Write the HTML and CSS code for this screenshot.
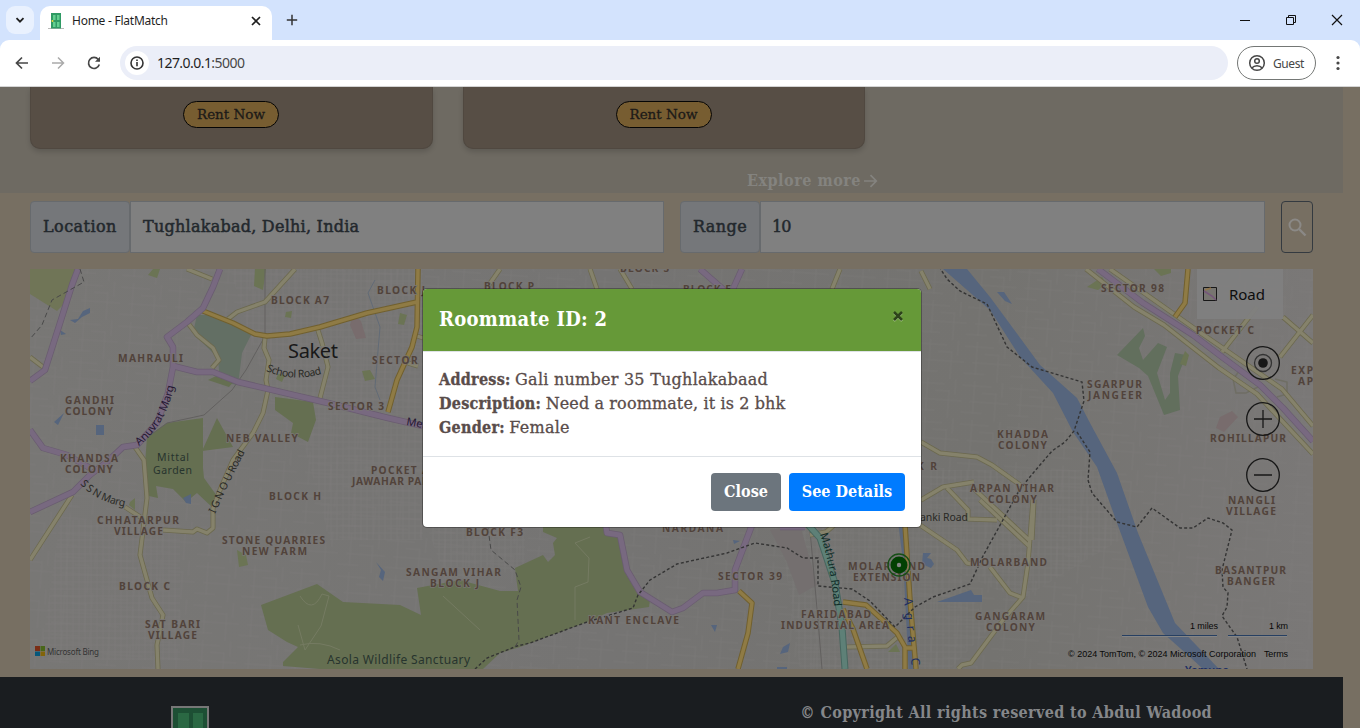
FILE: index.html
```html
<!DOCTYPE html>
<html lang="en">
<head>
<meta charset="utf-8">
<title>Home - FlatMatch</title>
<link rel="stylesheet" href="styles.css">
</head>
<body>
<div class="browser">
  <header class="tabs">
    <div class="tab-list"><svg width="12" height="12" viewBox="0 0 12 12"><path d="M2.5 4.2 6 7.7 9.5 4.2" fill="none" stroke="#1f1f1f" stroke-width="1.8"/></svg></div>
    <div class="tab">
      <svg class="favicon" width="16" height="16" viewBox="0 0 16 16"><path d="M0 15.5h16" stroke="#b9b9b9"/><path d="M3 0h10v15.5H3z" fill="#2f9a64"/><path d="M5 2h2.5v5H5zM9 2h2.500v5H9zM5 9h2.500v5H5zM9 9h2.500v5H9z" fill="#63cf8f"/><circle cx="4.500" cy="8" r="1" fill="#f5d93a"/></svg>
      <span class="tab-title">Home - FlatMatch</span>
      <svg class="tab-close" width="10" height="10" viewBox="0 0 10 10"><path d="m1 1 8 8M9 1 1 9" stroke="#1f1f1f" stroke-width="1.7"/></svg>
    </div>
    <svg class="new-tab" width="12" height="12" viewBox="0 0 12 12"><path d="M6 .8v10.400M.8 6h10.400" stroke="#333" stroke-width="1.5"/></svg>
    <div class="window-controls">
      <svg width="12" height="12" viewBox="0 0 12 12"><path d="M1 6.500h10" stroke="#111"/></svg>
      <svg width="12" height="12" viewBox="0 0 12 12"><path d="M1.500 3.500h7v7h-7zM3.500 3.500v-2h7v7h-2" fill="none" stroke="#111"/></svg>
      <svg width="12" height="12" viewBox="0 0 12 12"><path d="m1 1 10 10M11 1 1 11" stroke="#111" stroke-width="1.200"/></svg>
    </div>
  </header>
  <div class="toolbar">
    <svg width="16" height="16" viewBox="0 0 16 16"><path d="M14 8H3M8 2.500 2.500 8 8 13.500" fill="none" stroke="#474747" stroke-width="1.700"/></svg>
    <svg width="16" height="16" viewBox="0 0 16 16"><path d="M2 8h11M8 2.500 13.500 8 8 13.500" fill="none" stroke="#aaa" stroke-width="1.500"/></svg>
    <svg width="16" height="16" viewBox="0 0 16 16"><path d="M13.300 9.500A5.500 5.500 0 1 1 12.300 4.500L13.500 6" fill="none" stroke="#474747" stroke-width="1.700"/><path d="M14 1.800v5H9z" fill="#474747"/></svg>
    <div class="address"><span class="info"><svg width="16" height="16" viewBox="0 0 16 16"><circle cx="8" cy="8" r="6" fill="none" stroke="#333" stroke-width="1.600"/><path d="M8 7v4.200M8 4.600v1.500" stroke="#333" stroke-width="1.600"/></svg></span><span class="url"><b>127.0.0.1</b>:5000</span></div>
    <div class="guest"><svg width="18" height="18" viewBox="0 0 18 18"><circle cx="9" cy="9" r="7.300" fill="none" stroke="#474747" stroke-width="1.500"/><circle cx="9" cy="7" r="2.300" fill="none" stroke="#474747" stroke-width="1.500"/><path d="M3.800 14c2.600-3 7.800-3 10.400 0" fill="none" stroke="#474747" stroke-width="1.500"/></svg><span>Guest</span></div>
    <svg class="dots" width="4" height="16" viewBox="0 0 4 16"><circle cx="2" cy="2.500" r="1.600"/><circle cx="2" cy="8" r="1.600"/><circle cx="2" cy="13.500" r="1.600"/></svg>
  </div>
</div>

<main class="page">
  <section class="listings">
    <div class="cards">
      <div class="card"><button class="rent">Rent Now</button></div>
      <div class="card"><button class="rent">Rent Now</button></div>
    </div>
    <div class="explore"><span>Explore more</span><svg width="15" height="14" viewBox="0 0 15 14"><path d="M1 7h12M7.500 1.200 13.300 7l-5.800 5.800" fill="none" stroke="#84837f" stroke-width="1.700"/></svg></div>
  </section>

  <section class="search">
    <div class="field location"><span class="label">Location</span><span class="value">Tughlakabad, Delhi, India</span></div>
    <div class="field range"><span class="label">Range</span><span class="value">10</span></div>
    <button class="search-button"><svg width="19" height="19" viewBox="0 0 19 19"><circle cx="7" cy="7" r="5.500" fill="none" stroke="#8b8986" stroke-width="2"/><path d="m11 11 6.500 6.500" stroke="#8b8986" stroke-width="2.400"/></svg></button>
  </section>

  <svg class="map" width="1283" height="400" viewBox="30 269 1283 400">
    <defs>
      <pattern id="streets" width="47" height="39" patternUnits="userSpaceOnUse" patternTransform="rotate(4)"><path d="M0 5h29M12 0v33M8 21h39M34 11v28M0 32h21M40 0v15M20 12h14" fill="none" stroke="#858483" stroke-width=".7"/></pattern>
      <pattern id="blocks" width="6" height="7" patternUnits="userSpaceOnUse"><path d="M0 1h6M1 0v7" stroke="#82807f" stroke-width=".6"/></pattern>
      <linearGradient id="land" x1="0" x2="1"><stop stop-color="#787775"/><stop offset=".45" stop-color="#757473"/><stop offset=".75" stop-color="#747370"/><stop offset="1" stop-color="#7a7877"/></linearGradient>
      <g id="minor">
        <path d="M187 269l25 10M295 269l-30 33-28 10-9 7M188 323l9 12 16 13 6 12-7 8M265 338l-1 10 5 12-3 20 2 10-5 23-10 20-20 27-13 30-7 18v20l-6 5-10-4-4 3-30-2M317 327l5 16 6 24-8 31M30 357l13 10M135 447l9 13 3 38-7 57 12 43 11 17-6 30 1 24M72 495l-42 65M125 507l20 13M417 336l6 2M418 366l-10-3"/>
        <path d="M921 442l19 11 37 4 15 8 31 22M921 500l22-13 31-5M947 488l21 22v9l29 1M972 487l57 53M1034 500l-2 40M920 525l37 25 10 13 5 1M980 500l50 47M1033 500l-5 63-5 34-20 23-32 43-9 2-4 4M990 567l20 26 13 5M847 647l40-1 13-11M810 535l16-3 14-12M1222 352l35-45M1283 317l30 26M1313 315l-33 42"/>
        <path d="M1086 269l48 38 30 18 55 43 38 26 56 60M1110 269l88 62 32 22 52 36 31 37"/>
        <path d="M500 269l-14 20M590 269l7 20M620 269l12 20M840 269l-8 20M930 289l-9-18"/>
      </g>
      <g id="major">
        <path d="M203 311l30 12 22 11 12 2 23-2 30-7 47-14 50-11M418 269l-1 58-5 20-15 33-9 32M1188 269l-3 34-10 14M739 591l13 12-4 30-10 36M905 525l5 75 6 69M843 602l23 3 31 28 8 14v22M843 609l10 20 14 40M905 648h10"/>
      </g>
      <g id="arterial">
        <path d="M78 269l-6 16-12 38-15 47-15 11M220 269l-7 18-10 21-16 14-20 15 6 10v20l-5 26-11 30-20 22-14 2-15 14-18 14-17 17-43 20M30 430l13 18 24 7 23 13M173 366l24 6h16l25 10 90 21 60 15 35 8M605 520l2 13 13 2 7 35 13 22 32 20 11-4 20-15h14l18-3v-20l17-45"/>
        <path d="M1098 269l45 34 50 32 29 22 38 28 23 23 30 33M700 269l25 22M742 269l-10 22M780 527h25"/>
      </g>
    </defs>
    <rect x="30" y="269" width="1283" height="400" fill="url(#land)"/>
    <rect x="30" y="269" width="1283" height="400" fill="url(#streets)" opacity=".3"/>
    <path d="M230 269h193v180H330l-60-50zM60 520h120v140H40zM300 430h123v110H330zM425 520h100v50l-80 10zM780 528h150l60 100-40 41H800zM930 470h170l20 70-100 60-90-40z" fill="url(#blocks)" opacity=".5"/>

    <g class="park">
      <path d="M30 269h48l-13 34-8 8-27-17z" fill="#707557"/>
      <path d="M197 315l20 0 35 18-10 20-4 32-18-3-2-24-25-25z" fill="#636f64"/>
      <path d="M147 437l20-14 36-5v50l1 10 13 18-4 12-16-15-11 9-13-13-17-3 2 12-9-2-4-32zM217 418l16 29-31 4zM275 397l38 5 3 18-8 22-17-9 2-10-18-13zM208 380l10-5 17 5-6 7z"/>
      <path d="M261 605l56-21 26 18 57 3 21 10-4-27 43-8 40 11h18l-3-23 28-13 5 7 7-7-2-12 4-5-14-6v-12h62l2 15h13l7 35 13 22 10 8-1 7-42 6-20 9-67 25-20 6-17 16H320l-37-3v-4l15-15-11-5-19-12z"/>
      <path d="M1117 355l26-27 2 8-6 12 4 12 15-17 9 4-10 26 8 27 5-7v-20l5-20 11 2-8 21 2 34-16 5-16-39-9-8z" fill="#626f5d"/>
      <path d="M1154 269h17v4l-10 3zM1087 287l15-10 4 7-8 6zM1185 351l4 4-3 11-6-2zM148 275l5-6h7l-3 9zM255 269h11l-3 21-9-4zM286 312l6-1-1 7-6-1zM400 313l7 2-3 10-6-1zM278 374l7 1-3 7-6-3zM130 502l5-4v12l-6-5zM237 550l9 5 2 10-9 2zM362 371l8-1 5 9-10 2zM888 652l8-8 4 8z" fill="#6b7454"/>
      <path d="M353 315l8 6 5 17-10 1-6-14zM1220 417l12-6 6 6-14 15-8-4z" fill="#786c6d"/>
      <path d="M770 530l30-5 17 60-18 10-13-35z" fill="#746f6f"/>
    </g>
    <path d="M340 650q-20-10-40-5M300 596q12 19 22-2l7 2-8 30-16 24-7-25M443 596l37 34M590 537l-15 6 14 15-1 24-13 5v33" fill="none" stroke="#757b62" stroke-width="1"/>

    <g class="water">
      <path d="M943 269H967L990 297 1040 365 1077 398 1090 423 1117 473 1138 533 1175 623 1219 669H1203L1190 657 1163 633 1148 607 1117 523 1097 467 1073 432 1053 393 1020 357 990 310z"/>
      <path d="M70 320l8-1 5-8 7-3v5l-8 4-7 6zM60 330l6 4-5 1zM54 422l10-9-6 12zM96 425h8v10h-8zM183 498l8-4v10l-5-1zM376 562l9 10-2 9-4-4 2-7zM997 292h7l8 12-7-3zM923 553h8l-4 5 4 1 3 5-3 4-9-4zM937 602l34-12 3 5h8v7zM733 540l7 1-6 3zM711 625h6l-2 7zM783 647l7-4-2 9-8 2zM777 667h10v2h-10z"/>
      <path d="M902 525l5 40 5 104" fill="none" stroke="#5b677b" stroke-width="7"/>
      <path d="M375 280l-7 13 12 34-5 60 5 13" fill="none" stroke="#626b76"/>
    </g>

    <g class="rail">
      <path d="M265 269v67l-19 34-14 20-28 25-37 8-30 22M810 530l8 90 4 49"/>
    </g>
    <path d="M1241 369l-8 10 3 14h10l12-6M1275 379l12 3v12l-10 3" fill="none" stroke="#6f6e64" stroke-width="1.500"/>

    <use href="#minor" class="roads minor-casing"/>
    <use href="#minor" class="roads minor-fill"/>
    <use href="#major" class="roads major-casing"/>
    <use href="#major" class="roads major-fill"/>
    <use href="#arterial" class="roads arterial-casing"/>
    <use href="#arterial" class="roads arterial-fill"/>
    <path d="M802 518l18 20 15 45 7 44 3 42" fill="none" stroke="#47665f" stroke-width="7"/>
    <path d="M802 518l18 20 15 45 7 44 3 42" fill="none" stroke="#5e8077" stroke-width="5"/>

    <g class="boundary">
      <path d="M475 669l12-11 30-12 13-3 57-21 46-14 5-13 12-15 27-16 50-11 28-10 32 5 16 10h15v28l34 3 18 12 25 26 20-20 18-10 37-13 13-28 37-67 14-17 18-21 13-9 9-11 10-30-2-19-50-15-25-20-20-43-27-13-13-12-7-11"/>
      <path d="M1077 432l13 20-2 28 4 13 25 29 20 5 15-19 28 20h13l15-10 15 5 9 7-10 40 1 17 5 6-1 14-5 9 15 21 10 32"/>
      <path class="fine" d="M80 269l4 13-32 18-10 25-12 14M488 528l3 22 24 20 6 17-4 13 2 40-4 7"/>
    </g>

    <g class="place">
      <text x="271" y="304" textLength="58">BLOCK A7</text><text x="377" y="294" textLength="48">BLOCK J</text><text x="484" y="290" textLength="50">BLOCK P</text><text x="683" y="293" textLength="48">BLOCK E</text><text x="620" y="272" textLength="49">BLOCK S</text>
      <text x="118" y="362" textLength="65">MAHRAULI</text><text x="372" y="364" textLength="57">SECTOR 4</text><text x="65" y="404" textLength="49">GANDHI</text><text x="65" y="415" textLength="48">COLONY</text>
      <text x="328" y="410" textLength="56">SECTOR 3</text><text x="226" y="442" textLength="72">NEB VALLEY</text><text x="60" y="462" textLength="58">KHANDSA</text><text x="65" y="473" textLength="48">COLONY</text>
      <text x="371" y="474" textLength="58">POCKET A</text><text x="352" y="485" textLength="84">JAWAHAR PARK</text><text x="269" y="500" textLength="52">BLOCK H</text><text x="97" y="524" textLength="82">CHHATARPUR</text><text x="114" y="535" textLength="49">VILLAGE</text>
      <text x="222" y="544" textLength="103">STONE QUARRIES</text><text x="242" y="555" textLength="65">NEW FARM</text><text x="119" y="590" textLength="51">BLOCK C</text><text x="145" y="628" textLength="55">SAT BARI</text><text x="148" y="639" textLength="49">VILLAGE</text>
      <text x="466" y="536" textLength="57">BLOCK F3</text><text x="406" y="576" textLength="95">SANGAM VIHAR</text><text x="430" y="587" textLength="49">BLOCK J</text><text x="662" y="532" textLength="61">NARDANA</text><text x="718" y="580" textLength="64">SECTOR 39</text><text x="588" y="624" textLength="91">KANT ENCLAVE</text>
      <text x="848" y="570" textLength="77">MOLARBAND</text><text x="853" y="581" textLength="67">EXTENSION</text><text x="801" y="618" textLength="70">FARIDABAD</text><text x="781" y="629" textLength="108">INDUSTRIAL AREA</text><text x="970" y="566" textLength="77">MOLARBAND</text><text x="975" y="620" textLength="70">GANGARAM</text><text x="986" y="631" textLength="49">COLONY</text>
      <text x="970" y="492" textLength="84">ARPAN VIHAR</text><text x="988" y="503" textLength="49">COLONY</text><text x="917" y="470" textLength="20">K R</text><text x="997" y="438" textLength="51">KHADDA</text><text x="998" y="449" textLength="49">COLONY</text><text x="1087" y="388" textLength="55">SGARPUR</text><text x="1088" y="399" textLength="54">JANGEER</text>
      <text x="1101" y="292" textLength="63">SECTOR 98</text><text x="1196" y="334" textLength="58">POCKET C</text><text x="1291" y="374" textLength="22">EXP</text><text x="1298" y="385" textLength="15">AP</text><text x="1210" y="442" textLength="76">ROHILLAPUR</text><text x="1228" y="504" textLength="47">NANGLI</text><text x="1226" y="515" textLength="50">VILLAGE</text><text x="1215" y="574" textLength="71">BASANTPUR</text><text x="1227" y="585" textLength="48">BANGER</text>
    </g>
    <text x="288" y="358" textLength="50" class="city">Saket</text>
    <g class="nature"><text x="157" y="461" textLength="32">Mittal</text><text x="153" y="474" textLength="39">Garden</text><text x="327" y="664" textLength="143" class="wide">Asola Wildlife Sanctuary</text></g>
    <g class="road">
      <path id="anuvrat" d="M139 446q30-24 36-66" fill="none"/><path id="school" d="M266 371q28 12 59 2" fill="none"/><path id="ssn" d="M80 484q16 18 47 23" fill="none"/><path id="ignou" d="M215 514q14-32 32-66" fill="none"/><path id="mathura" d="M820 534q11 32 14 73" fill="none"/>
      <text textLength="71" fill="#251832"><textPath href="#anuvrat">Anuvrat Marg</textPath></text><text class="small" textLength="57"><textPath href="#school">School Road</textPath></text><text class="small" textLength="51"><textPath href="#ssn">S S N Marg</textPath></text><text class="small" textLength="69"><textPath href="#ignou">I G N O U Road</textPath></text><text textLength="74" fill="#102c28"><textPath href="#mathura">Mathura Road</textPath></text>
      <text class="canal" x="904" y="598" transform="rotate(86 904 598)">A</text><text class="canal" x="905" y="613" transform="rotate(86 905 613)">g</text><text class="canal" x="907" y="626" transform="rotate(86 907 626)">r</text><text class="canal" x="908" y="636" transform="rotate(86 908 636)">a</text><text class="canal" x="911" y="658" transform="rotate(86 911 658)">C</text>
      <text x="406" y="425" transform="rotate(10 406 425)" fill="#251832">Mehr</text><text x="915" y="521" textLength="53" class="small">Tanki Road</text><text x="1185" y="674" textLength="44" fill="#202e63" font-weight="600">Yamuna</text>
    </g>

    <g><circle cx="899" cy="565" r="11" fill="none" stroke="#164f16" stroke-width="1.300"/><circle cx="899" cy="565" r="8.500" fill="#034003"/><circle cx="899" cy="565" r="2.200" fill="#858585"/></g>
    <rect x="1197" y="269" width="86" height="50" fill="#808080" opacity=".92"/>
    <path d="M1203.500 287.500h13v13h-13z" fill="#777570" stroke="#171717"/><path d="M1204 291l8 5 4 4" fill="none" stroke="#75567a" stroke-width="1.500"/><path d="M1205 290l6-2" stroke="#927548" stroke-width="1.500"/>
    <text x="1229" y="300" class="map-mode" textLength="36">Road</text>
    <g class="controls"><circle cx="1263" cy="363" r="16.300"/><circle cx="1263" cy="419" r="16.300"/><circle cx="1263" cy="475" r="16.300"/><path d="M1254 419h18M1263 410v18M1254 475h18"/><circle class="target-ring" cx="1263" cy="363" r="8.500"/><circle class="target-dot" cx="1263" cy="363" r="4.800"/></g>
    <path d="M35 646h5v5h-5z" fill="#7a2d15"/><path d="M40.500 646h4.500v5h-4.500z" fill="#496619"/><path d="M35 651.500h5v4.500h-5z" fill="#06577b"/><path d="M40.500 651.500h4.500v4.500h-4.500z" fill="#82640a"/>
    <text x="47" y="654.500" class="bing" textLength="52">Microsoft Bing</text>
    <g class="legal"><text x="1190" y="629" textLength="28">1 miles</text><text x="1269" y="629" textLength="19">1 km</text><text x="1068" y="657" textLength="188">© 2024 TomTom, © 2024 Microsoft Corporation</text><text x="1264" y="657" textLength="24">Terms</text></g>
    <path d="M1122 636.500h95M1228 636.500h59" stroke="#858585"/><path d="M1122 635.500h95M1228 635.500h59" stroke="#263f62"/>
  </svg>

  <footer class="footer">
    <svg width="40" height="26" viewBox="0 0 40 26"><path d="M2 26V1h36v25" fill="#1d4f34" stroke="#777" stroke-width="2"/><path d="M8 7h11v19H8zM23 7h10v19H23z" fill="#2a6843"/></svg>
    <span class="copyright">© Copyright All rights reserved to Abdul Wadood</span>
  </footer>
</main>

<div class="modal" role="dialog">
  <div class="modal-header"><h5>Roommate ID: 2</h5><svg width="12" height="12" viewBox="0 0 12 12"><path d="m2 3 8 8M10 3l-8 8" stroke="#a7c68b" stroke-width="2.400"/><path d="m2 2 8 8M10 2l-8 8" stroke="#2d431b" stroke-width="2.500"/></svg></div>
  <div class="modal-body">
    <p><b>Address:</b><span>Gali number 35 Tughlakabaad</span></p>
    <p><b>Description:</b><span class="description">Need a roommate, it is 2 bhk</span></p>
    <p><b>Gender:</b><span>Female</span></p>
  </div>
  <div class="modal-footer"><button class="button close">Close</button><button class="button details">See Details</button></div>
</div>
</body>
</html>
```
FILE: styles.css
```css
* { box-sizing: border-box; }
body { margin: 0; width: 1360px; height: 728px; overflow: hidden; background: #776f62; font-family: "DejaVu Serif", serif; font-size: 16px; }
svg { display: block; flex: none; }
button { font: inherit; }
.browser { font-family: "Noto Sans", sans-serif; height: 87px; background: #d3e3fd; border-bottom: 1px solid #d5d5d5; }
.tabs { display: flex; align-items: center; height: 40px; padding-left: 6px; }
.tab-list { width: 28px; height: 28px; border-radius: 9px; background: #e9f1fe; display: grid; place-items: center; }
.tab { width: 232px; height: 34px; margin: 6px 0 0 6px; padding: 0 11px 5px 8px; display: flex; align-items: center; background: #fff; border-radius: 10px 10px 0 0; }
.tab-title { font-size: 12px; color: #1f1f1f; margin-left: 8px; letter-spacing: -.25px; }
.tab-close { margin-left: auto; }
.new-tab { margin-left: 14px; }
.window-controls { display: flex; gap: 34px; margin-left: auto; padding-right: 17px; }
.toolbar { height: 46px; background: #fff; border-radius: 9px 9px 0 0; display: flex; align-items: center; gap: 20px; padding: 0 20px 0 14px; }
.address { flex: 1; display: flex; align-items: center; height: 34px; margin: 0 -11px 0 -2px; padding-left: 5px; border-radius: 17px; background: #ebeef8; }
.info { width: 24px; height: 24px; border-radius: 50%; background: #fff; display: grid; place-items: center; }
.url { margin-left: 8px; padding-bottom: 1px; font-size: 14px; letter-spacing: -.55px; color: #474747; }
.url b { font-weight: 400; color: #1f1f1f; }
.guest { width: 79px; height: 34px; border: 1px solid #747775; border-radius: 17px; display: flex; align-items: center; gap: 7px; padding-left: 10px; font-size: 12px; letter-spacing: -.4px; color: #474747; }
.dots { fill: #474747; }
.page { height: 641px; display: flex; flex-direction: column; }
.listings { width: 1343px; height: 106px; background: #6e6a62; }
.cards { display: flex; gap: 30px; padding-left: 30px; }
.card { width: 402.5px; height: 62px; padding-top: 14px; text-align: center; background: #574e45; border: 1px solid #504840; border-top: 0; border-radius: 0 0 10px 10px; box-shadow: 0 3px 5px rgba(0,0,0,.15); }
.rent { width: 96px; height: 27px; padding: 0; border: 1px solid #050505; border-radius: 14px; background: #775d31; color: #1c1a18; font-size: 13.5px; -webkit-text-stroke: .3px; line-height: 23px; display: block; margin: 0 auto 0 152px; }
.explore { display: flex; align-items: center; gap: 2px; padding: 20px 0 0 747px; color: #84837f; font-stretch: condensed; font-family: "DejaVu Serif Condensed", "DejaVu Serif", serif; letter-spacing: .5px; line-height: 24px; font-weight: 700; }
.search { display: flex; height: 52px; margin: 8px 47px 16px 30px; }
.field { display: flex; height: 52px; color: #23282d; line-height: 49px; letter-spacing: .25px; -webkit-text-stroke: .5px; }
.location { width: 634px; margin-right: 16px; }
.range { width: 585px; margin-right: 16px; }
.label { border: 1px solid #676a6d; border-radius: 4px; background: #75777a; padding-left: 12px; width: 100px; letter-spacing: .45px; }
.range .label { width: 80px; }
.value { flex: 1; background: #808080; border: 1px solid #676a6d; padding-left: 12px; }
.range .value { letter-spacing: -1px; padding-left: 11px; }
.search-button { width: 32px; height: 52px; padding: 0; border: 1px solid #343a40; border-radius: 4px; background: transparent; display: grid; place-items: center; }
.map { margin-left: 30px; font-family: "Noto Sans", sans-serif; }
.park { fill: #656f51; }
.water { fill: #56657d; }
.rail path { fill: none; stroke: #62605f; stroke-width: 1; }
.roads { fill: none; stroke-linejoin: round; }
.minor-casing { stroke: #6c694f; stroke-width: 5; }
.minor-fill { stroke: #85826b; stroke-width: 3.4; }
.major-casing { stroke: #71602f; stroke-width: 5.5; }
.major-fill { stroke: #8f7b45; stroke-width: 3.5; }
.arterial-casing { stroke: #6a5d70; stroke-width: 6.5; }
.arterial-fill { stroke: #786980; stroke-width: 5; }
.boundary { fill: none; stroke: #343434; stroke-width: 1.4; stroke-dasharray: 3 2.2; }
.boundary .fine { stroke-width: 1; stroke: #494949; stroke-dasharray: 5 3; }
.place { font-size: 10.2px; font-weight: 700; fill: #51433b; stroke: #797674; stroke-width: 1.3px; paint-order: stroke; }
.city { font-size: 20px; fill: #191919; stroke: #777; stroke-width: 2px; paint-order: stroke; }
.nature { font-size: 10.5px; fill: #27342e; }
.nature .wide { font-size: 12px; }
.road { font-size: 11px; fill: #292925; }
.road .small { font-size: 10.5px; }
.road .canal { font-size: 12px; fill: #202e63; }
.map-mode { font-size: 15px; fill: #0d0d0d; }
.controls circle, .controls path { fill: none; stroke: #171717; stroke-width: 1.3; }
.controls .target-ring { stroke: #333; }
.controls .target-dot { fill: #171717; stroke: none; }
.bing { font-size: 8px; fill: #333; }
.legal { font-family: "Liberation Sans", Arial, sans-serif; font-size: 9px; fill: #080808; }
.footer { width: 1343px; flex: 1; margin-top: 8px; padding: 29px 131px 0 170px; display: flex; justify-content: space-between; background: #1a1d20; overflow: hidden; }
.copyright { color: #85878a; font-stretch: condensed; font-family: "DejaVu Serif Condensed", "DejaVu Serif", serif; letter-spacing: .34px; line-height: 13px; font-weight: 700; white-space: nowrap; }
.modal { position: absolute; left: 422px; top: 288px; width: 500px; height: 240px; border: 1px solid rgba(0,0,0,.3); border-radius: 5px; background: #fff; background-clip: padding-box; overflow: hidden; color: #594c4a; }
.modal-header { height: 63px; background: #669938; border-bottom: 1px solid #dee2e6; display: flex; justify-content: space-between; padding: 16px 17px 16px 16px; }
.modal-header svg { margin-top: 5px; }
.modal h5 { margin: 0; color: #fff; font-family: "DejaVu Serif Condensed", "DejaVu Serif", serif; font-stretch: condensed; font-size: 20px; letter-spacing: .3px; line-height: 28px; }
.modal-body { height: 105px; padding: 16px 16px 15px; border-bottom: 1px solid #dee2e6; }
.modal p { display: flex; gap: 4.5px; margin: 0; line-height: 24px; white-space: nowrap; letter-spacing: .25px; -webkit-text-stroke: .3px; }
.modal .description { letter-spacing: .12px; }
.modal b { font-family: "DejaVu Serif Condensed", "DejaVu Serif", serif; font-stretch: condensed; }
.modal-footer { display: flex; justify-content: flex-end; gap: 8px; padding: 16px; }
.button { height: 38px; border: 0; border-radius: 4px; color: #fff; font-family: "DejaVu Serif Condensed", "DejaVu Serif", serif; font-stretch: condensed; font-weight: 700; padding: 0 0 2px; }
.close { width: 70px; background: #6c757d; }
.details { width: 116px; background: #007bff; }
```
